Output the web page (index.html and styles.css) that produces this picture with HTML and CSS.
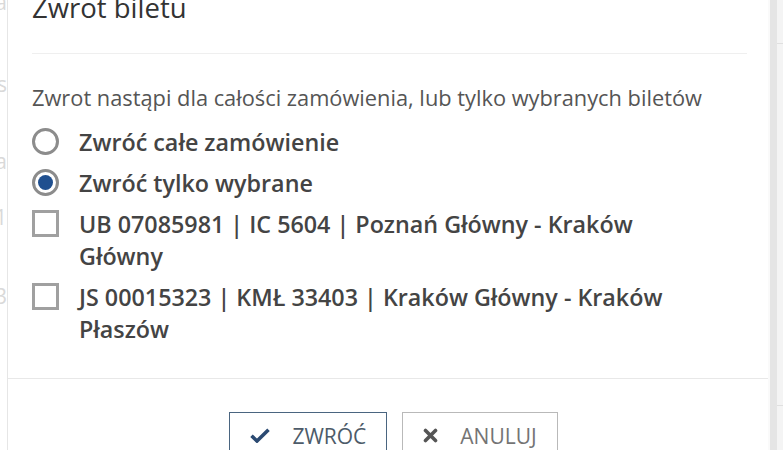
FILE: index.html
```html
<!DOCTYPE html>
<html lang="pl">
<head>
<meta charset="utf-8">
<title>Zwrot biletu</title>
<link rel="stylesheet" href="styles.css">
</head>
<body>
<div class="page">
  <div class="bg-left">
    <div class="bg-row r1">Data</div>
    <div class="bg-row r2">Status</div>
    <div class="bg-row r3">Kwota</div>
    <div class="bg-row r4">1</div>
    <div class="bg-row r5">3</div>
  </div>
  <div class="modal">
    <div class="modal-header">
      <h2 class="modal-title">Zwrot biletu</h2>
    </div>
    <div class="modal-body">
      <p class="desc">Zwrot nastąpi dla całości zamówienia, lub tylko wybranych biletów</p>
      <ul class="options">
        <li class="opt">
          <span class="radio"></span>
          <span class="opt-text">Zwróć całe zamówienie</span>
        </li>
        <li class="opt">
          <span class="radio checked"></span>
          <span class="opt-text">Zwróć tylko wybrane</span>
        </li>
        <li class="opt">
          <span class="check"></span>
          <span class="opt-text">UB 07085981 | IC 5604 | Poznań Główny - Kraków Główny</span>
        </li>
        <li class="opt">
          <span class="check"></span>
          <span class="opt-text">JS 00015323 | KMŁ 33403 | Kraków Główny - Kraków Płaszów</span>
        </li>
      </ul>
    </div>
    <div class="modal-footer">
      <button class="btn btn-primary">
        <svg class="ico ico-check" width="20" height="15" viewBox="0 0 20 15"><path d="M1.5 7.8 L7 13 L18.5 1.8" fill="none" stroke="#2b4a72" stroke-width="3.6" stroke-linejoin="miter"/></svg>
        <span>ZWRÓĆ</span>
      </button>
      <button class="btn btn-default">
        <svg class="ico ico-x" width="15" height="15" viewBox="0 0 15 15"><path d="M2.5 2.5 L12.5 12.5 M12.5 2.5 L2.5 12.5" fill="none" stroke="#555" stroke-width="3.6" stroke-linecap="round"/></svg>
        <span>ANULUJ</span>
      </button>
    </div>
  </div>
  <div class="bg-right">
    <div class="track"></div>
    <div class="edge">
      <div class="tick t1"></div>
      <div class="tick t2"></div>
    </div>
  </div>
</div>
</body>
</html>
```
FILE: styles.css
```css
html, body {
  margin: 0;
  padding: 0;
}
body {
  width: 783px;
  height: 450px;
  overflow: hidden;
  background: #ffffff;
  font-family: "Open Sans", "Noto Sans", sans-serif;
  color: #333;
}
.page {
  display: flex;
  height: 450px;
}
.bg-left {
  width: 7px;
  flex: none;
  border-right: 1px solid #e6e6e6;
  overflow: hidden;
  display: flex;
  flex-direction: column;
  align-items: flex-end;
  color: #d9d9d9;
  font-size: 21px;
}
.bg-row {
  white-space: nowrap;
  line-height: 24px;
  height: 24px;
}
.r1 { margin-top: -10px; }
.r2 { margin-top: 58px; }
.r3 { margin-top: 53px; }
.r4 { margin-top: 32px; }
.r5 { margin-top: 55px; }

.modal {
  width: 760px;
  flex: none;
  display: flex;
  flex-direction: column;
  background: #fff;
  margin-top: -7px;
}
.modal-header {
  margin: 0 21px 0 24px;
  padding-bottom: 30px;
  border-bottom: 1px solid #efefef;
}
.modal-title {
  margin: 0;
  font-size: 27.5px;
  line-height: 30px;
  font-weight: 400;
  color: #333;
}
.modal-body {
  padding: 27.5px 21px 33px 24px;
}
.desc {
  margin: 0 0 12px 0;
  font-size: 21.8px;
  line-height: 32px;
  color: #555;
}
.options {
  list-style: none;
  margin: 0;
  padding: 0;
}
.opt {
  display: flex;
  align-items: flex-start;
  gap: 20px;
  margin-bottom: 9px;
}
.opt:last-child {
  margin-bottom: 0;
}
.opt-text {
  max-width: 625px;
  font-size: 23.3px;
  line-height: 32px;
  font-weight: 600;
  color: #444;
}
.radio {
  flex: none;
  box-sizing: border-box;
  width: 27px;
  height: 27px;
  margin-top: 2.5px;
  border: 3px solid #8c8c8c;
  border-radius: 50%;
  background: #fff;
  display: flex;
  align-items: center;
  justify-content: center;
}
.radio.checked::after {
  content: "";
  width: 15px;
  height: 15px;
  border-radius: 50%;
  background: #1f4f8f;
}
.check {
  flex: none;
  box-sizing: border-box;
  width: 27px;
  height: 27px;
  margin-top: 2.5px;
  border: 3px solid #a0a0a0;
  background: #fff;
}
.modal-footer {
  border-top: 1px solid #e8e8e8;
  padding: 33px 0 0 11px;
  display: flex;
  justify-content: center;
  gap: 15px;
}
.btn {
  display: flex;
  align-items: center;
  gap: 22px;
  padding: 9px 20px 20px 20px;
  background: #fff;
  font-family: "Open Sans", "Noto Sans", sans-serif;
  font-size: 21px;
  line-height: 28px;
  font-weight: 400;
  border-radius: 0;
  cursor: pointer;
}
.btn-primary {
  border: 1px solid #4a6580;
  color: #4d5b69;
}
.btn-default {
  border: 1px solid #b9b9b9;
  color: #747474;
}
.ico {
  flex: none;
  display: block;
}
.bg-right {
  flex: 1;
  display: flex;
  background: #fafafa;
}
.track {
  width: 7px;
  margin-left: 2px;
  background: #e5e5e5;
}
.edge {
  flex: 1;
  position: relative;
  background: #f4f4f4;
}
.tick {
  position: absolute;
  left: 0;
  right: 0;
  height: 1px;
  background: #e0e0e0;
}
.t1 { top: 43px; }
.t2 { top: 405px; }
```
